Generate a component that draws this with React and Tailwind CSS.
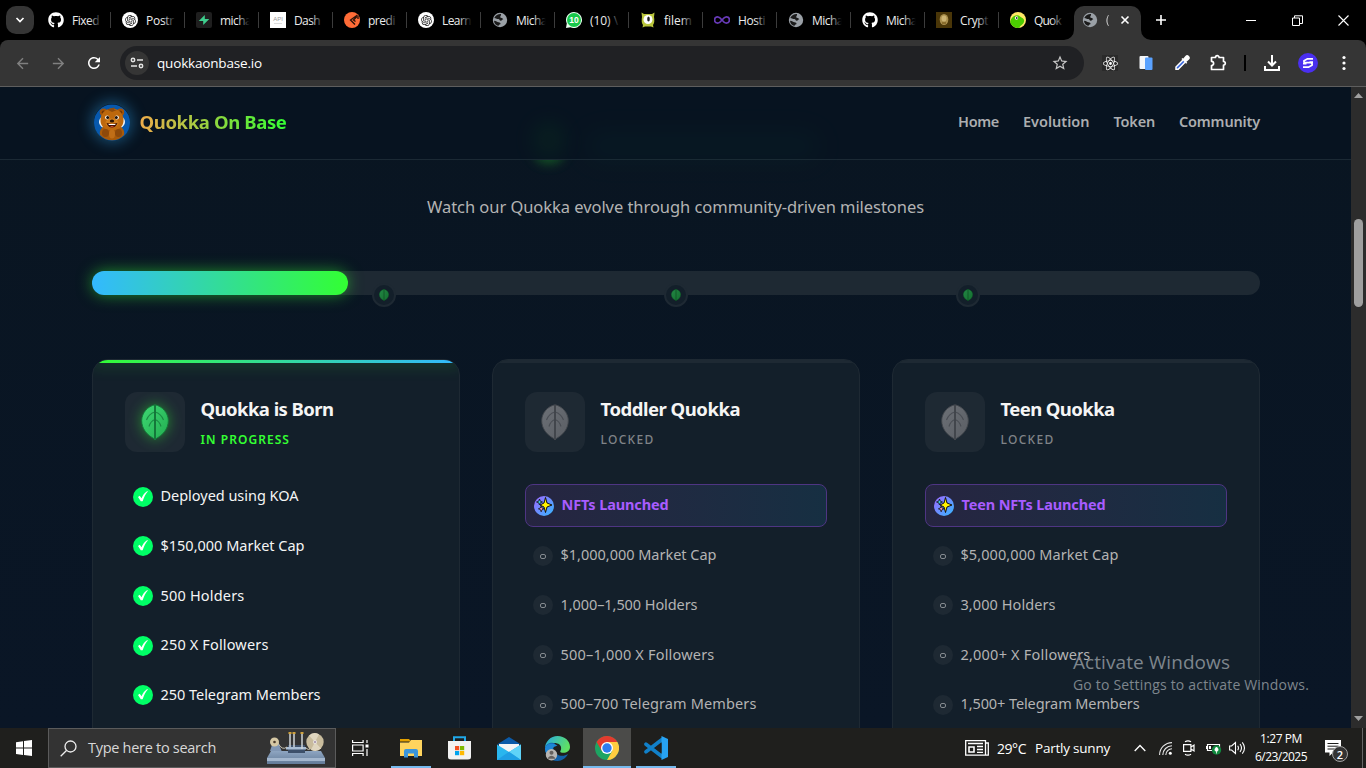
import React, { useLayoutEffect, useRef } from "react";
import { FaGithub } from "react-icons/fa";
import { RiOpenaiFill } from "react-icons/ri";
import { SiReact } from "react-icons/si";
import { MdStarBorder, MdRefresh, MdArrowBack, MdArrowForward } from "react-icons/md";

/* Sets the letter spacing so that a label takes exactly `w` pixels. */
function Fit({ w, className = "", children }) {
  const ref = useRef(null);
  useLayoutEffect(() => {
    const el = ref.current;
    el.style.letterSpacing = "0px";
    const natural = el.getBoundingClientRect().width;
    el.style.letterSpacing = (w - natural) / String(children).length + "px";
  }, [w, children]);
  return (
    <span ref={ref} className={"inline-block whitespace-pre " + className}>
      {children}
    </span>
  );
}

const ui = "font-['Open_Sans','Noto_Sans',sans-serif]";

/* ---------- browser tabs ---------- */
const Gpt = () => (
  <span className="flex h-4 w-4 items-center justify-center rounded-full bg-white">
    <RiOpenaiFill size={13} color="#222" />
  </span>
);
const Globe = () => (
  <svg width="16" height="16" viewBox="0 0 16 16" className="shrink-0">
    <circle cx="8" cy="8" r="7.200" fill="#9aa0a6" />
    <path d="M9 2C6.500 1.800 3.500 3 2.300 6c1.700.3 2.700 1.300 4 1 1.500.2 1 1.700 2.500 1.700 1.300 0 1.200-1.200 2.500-1.400-.5-1.800-2.500-.9-3.100-2.100C8 4 9.500 3.500 9 2zM2 8.800c.2 2.700 2 4.700 4.500 5.200 0-1.200 1-1.500 1.800-1.800.8-.5-.3-1.700-1.800-1.900C5 10.200 4.500 9 2 8.800z" fill="#1b1b1b" />
  </svg>
);
const Github = () => <FaGithub size={16} color="#fff" />;
const Supabase = () => (
  <svg width="16" height="16" viewBox="0 0 16 16">
    <rect width="16" height="16" rx="2" fill="#1f1f1f" />
    <path d="M8.800 3v4.100h4.500L7.200 13V9.100H2.800z" fill="#3ecf8e" />
  </svg>
);
const Api = () => (
  <span className="flex h-4 w-4 flex-col items-center justify-center bg-white font-['Liberation_Sans',sans-serif] text-[6px] leading-[7px] text-[#999]">
    API
    <span className="h-px w-2 bg-[#ddd]" />
  </span>
);
const Postman = () => (
  <svg width="16" height="16" viewBox="0 0 16 16">
    <circle cx="8" cy="8" r="8" fill="#ff6c37" />
    <path d="M13.500 3 6.500 8l4.500 4.500M13 4.500 9.500 8l2 1.500M14 4v3" stroke="#2a1208" strokeWidth="1.300" fill="none" />
  </svg>
);
const Whats = () => (
  <svg width="16" height="16" viewBox="0 0 16 16">
    <path d="M8 0a8 8 0 1 1-3.500 15.200L0 16l.8-4.500A8 8 0 0 1 8 0z" fill="#eafff0" />
    <circle cx="8" cy="8" r="7" fill="#18c84b" />
    <text x="8" y="11" textAnchor="middle" fontSize="8.500" fontWeight="700" fill="#fff" fontFamily="Liberation Sans">10</text>
  </svg>
);
const Monster = () => (
  <svg width="16" height="16" viewBox="0 0 16 16">
    <path d="M1.500.5 4 2h8l2.500-1.500L14 5q1 5-1 8l.5 2.500L11 14.500H5L2.500 15.500 3 13Q1 10 2 5z" fill="#b9c53c" />
    <circle cx="8" cy="7.500" r="4.500" fill="#fff" />
    <ellipse cx="8.500" cy="7" rx="1.300" ry="2.500" fill="#222" />
  </svg>
);
const Infinity8 = () => (
  <svg width="16" height="16" viewBox="0 0 16 16">
    <path d="M8 8C6.300 5.600 5 4.800 3.700 4.800a3.100 3.100 0 0 0 0 6.300C5 11.100 6.300 10.300 8 8s3-3.200 4.300-3.200a3.100 3.100 0 0 1 0 6.300C11 11.100 9.700 10.300 8 8z" fill="none" stroke="#673ab7" strokeWidth="1.700" />
  </svg>
);
const Coin = () => (
  <svg width="16" height="16" viewBox="0 0 16 16">
    <rect width="16" height="16" fill="#4a3608" />
    <ellipse cx="8" cy="7.500" rx="4.300" ry="5.600" fill="#a98e4c" />
    <ellipse cx="8" cy="6.500" rx="2.500" ry="3" fill="#cdb473" />
    <rect x="6" y="10" width="4" height="2" fill="#8a6d2c" />
  </svg>
);
const Gecko = () => (
  <svg width="16" height="16" viewBox="0 0 16 16">
    <circle cx="8" cy="8" r="8" fill="#ffe866" />
    <path d="M2 6c2-3 6-3.500 8-1.500 2 1.500 4 2 4.200 4C14 13 10 13 9.500 15.800 5 16.500 1 13.500.4 10.500.1 8.500 1 7 2 6z" fill="#4bcc00" />
    <circle cx="6.500" cy="6" r="1.700" fill="#fff" />
    <circle cx="6.700" cy="6" r=".9" fill="#333" />
  </svg>
);

const tabs = [
  [Github, "Fixed", 27], [Gpt, "Postr", 28], [Supabase, "micha", 31], [Api, "Dash", 26], [Postman, "predi", 27], [Gpt, "Learn", 29], [Globe, "Micha", 31],
  [Whats, "(10) \\", 28], [Monster, "filem", 28], [Infinity8, "Hosti", 27], [Globe, "Micha", 31], [Github, "Micha", 31], [Coin, "Crypt", 28], [Gecko, "Quok", 27],
];

function TabStrip() {
  return (
    <div className="flex h-10 items-center bg-black">
      <div className="ml-1.5 mr-[3px] flex h-7 w-7 items-center justify-center rounded-[10px] bg-[#353535]">
        <svg width="10" height="10" viewBox="0 0 10 10"><path d="M1.500 3 5 6.500 8.500 3" stroke="#fff" strokeWidth="1.700" fill="none" /></svg>
      </div>
      {tabs.map(([Icon, label, w], i) => (
        <div key={i} className="flex h-full w-[74px] items-center pl-[11px]">
          <span className="flex h-4 w-4 items-center justify-center"><Icon /></span>
          <span className="relative ml-2 w-7 whitespace-nowrap pt-px text-[12px] text-[#ececec]">
            <Fit w={w}>{label}</Fit>
            <span className="absolute inset-y-0 -right-1 w-[15px] bg-gradient-to-r from-transparent to-black to-85%" />
          </span>
          <span className={"ml-auto h-4 w-[1.5px] " + (i < 13 ? "bg-[#3c3c3c]" : "")} />
        </div>
      ))}
      <div className="relative ml-px flex h-full w-[67px] items-end">
        <div className="flex h-[34px] w-full items-center rounded-t-[10px] bg-[#353535] pb-1.5 pl-2">
          <span className="flex h-4 w-4 items-center justify-center"><Globe /></span>
          <span className="ml-2 w-[4px] whitespace-nowrap bg-gradient-to-r from-white to-[#777] bg-clip-text text-[12px] text-transparent">(</span>
          <svg className="ml-[7px]" width="16" height="16" viewBox="0 0 16 16"><path d="M4.500 4.500l7 7M11.500 4.500l-7 7" stroke="#fff" strokeWidth="1.600" /></svg>
        </div>
        <svg className="absolute bottom-0 -left-[10px]" width="10" height="10"><path d="M10 0v10H0A10 10 0 0 0 10 0z" fill="#353535" /></svg>
        <svg className="absolute bottom-0 -right-[10px]" width="10" height="10"><path d="M0 0v10h10A10 10 0 0 1 0 0z" fill="#353535" /></svg>
      </div>
      <div className="flex h-full w-[87px] items-center pl-[15px]">
        <svg width="10" height="10" viewBox="0 0 10 10"><path d="M5 0v10M0 5h10" stroke="#fff" strokeWidth="1.600" /></svg>
      </div>
      <div className="flex w-[46px] justify-center"><span className="h-px w-2.5 bg-white" /></div>
      <div className="flex w-[46px] justify-center">
        <svg width="11" height="11" viewBox="0 0 11 11" fill="none" stroke="#fff"><path d="M.5 3h7v7.500h-7zM2.500 3V.8h8v7.700h-3" /></svg>
      </div>
      <div className="flex w-[46px] justify-center">
        <svg width="11" height="11" viewBox="0 0 11 11"><path d="M.5.5l10 10M10.500.5l-10 10" stroke="#fff" strokeWidth="1.100" /></svg>
      </div>
    </div>
  );
}

const Cell = ({ children }) => <div className="flex h-full w-9 shrink-0 items-center justify-center">{children}</div>;

function Toolbar() {
  return (
    <div className="bg-black">
      <div className="flex h-[47px] items-center rounded-t-[8px] border-b border-[#5e5e5e] bg-[#353535] pl-1">
        <Cell><MdArrowBack size={17} color="#808080" /></Cell>
        <Cell><MdArrowForward size={17} color="#808080" /></Cell>
        <Cell><MdRefresh size={18} color="#fff" /></Cell>
        <div className="ml-2 mr-2 flex h-[34px] w-[964px] items-center rounded-full bg-[#202124] pl-[5px] pr-[15px]">
          <span className="flex h-6 w-6 items-center justify-center rounded-full bg-[#353535]">
            <svg width="14" height="14" viewBox="0 0 14 14" fill="none" stroke="#e3e3e3" strokeWidth="1.500">
              <circle cx="3" cy="4" r="1.700" /><path d="M7 4h6M1 10h6" /><circle cx="11" cy="10" r="1.700" />
            </svg>
          </span>
          <Fit w={105} className="ml-2 text-[13.500px] text-white">quokkaonbase.io</Fit>
          <MdStarBorder size={18} color="#c7c7c7" className="ml-auto" />
        </div>
        <Cell><span className="flex h-4 w-4 items-center justify-center bg-[#2a2a2a]"><SiReact size={15} color="#fff" /></span></Cell>
        <Cell>
          <svg width="14" height="16" viewBox="0 0 14 16"><rect x=".5" y="1" width="9" height="13" rx="1" fill="#f4f6fa" /><rect x="6" y="2.500" width="7.500" height="12.500" rx="1" fill="#5aa2ff" /></svg>
        </Cell>
        <Cell>
          <svg width="16" height="16" viewBox="0 0 16 16"><path d="M9 5 2 12v2.300h2.200L11 7.200" fill="#3563d9" stroke="#fff" strokeWidth="1.500" /><path d="M8 3.500l4.700 4.700M9.500 4.500 12 1.500c1.500-1.500 4 1 2.500 2.500l-3 2.700z" fill="#fff" stroke="#fff" strokeWidth="1.600" /></svg>
        </Cell>
        <Cell>
          <svg width="18" height="18" viewBox="0 0 18 18"><path d="M2.500 3.500h4a1.800 1.800 0 0 1 3.600 0h4.400v4a1.800 1.800 0 0 1 0 3.600v4.400H2.500v-4a2.100 2.100 0 0 0 0-4.200z" fill="none" stroke="#fff" strokeWidth="1.700" strokeLinejoin="round" /></svg>
        </Cell>
        <div className="flex w-[18px] justify-center"><span className="h-4 w-[2px] bg-black" /></div>
        <Cell>
          <svg width="16" height="16" viewBox="0 0 16 16" fill="none" stroke="#fff" strokeWidth="2"><path d="M8 0v10M4 6.500l4 4 4-4M1 11v4h14v-4" /></svg>
        </Cell>
        <Cell>
          <svg width="20" height="20" viewBox="0 0 20 20"><circle cx="10" cy="10" r="10" fill="#4a2ff0" /><path d="M15 5.800H9.500L6 7.800q-.3 1.700 1.500 1.900h5q2.200.2 1.500 2.500l-3.500 2H5M11.500 9.200h3.500M5 10.700h3.500" fill="none" stroke="#fff" strokeWidth="1.800" /></svg>
        </Cell>
        <Cell>
          <svg width="4" height="16" viewBox="0 0 4 16" fill="#fff"><circle cx="2" cy="2.500" r="1.600" /><circle cx="2" cy="8" r="1.600" /><circle cx="2" cy="13.500" r="1.600" /></svg>
        </Cell>
      </div>
    </div>
  );
}

/* ---------- web page ---------- */
function Bear() {
  return (
    <div className="-mt-[3px] h-9 w-9 shrink-0 rounded-full shadow-[0_0_14px_3px_rgba(45,160,230,0.4)]">
      <svg width="36" height="37" viewBox="0 0 36 37">
        <circle cx="18" cy="18.500" r="18" fill="#0759ae" />
        <ellipse cx="18" cy="18" rx="13" ry="8" fill="#eef3f7" />
        <circle cx="9.500" cy="8.300" r="3.700" fill="#a45307" /><circle cx="26.500" cy="8.300" r="3.700" fill="#a45307" />
        <circle cx="9.700" cy="8.300" r="1.900" fill="#6f3504" /><circle cx="26.300" cy="8.300" r="1.900" fill="#6f3504" />
        <path d="M6 31c-1-5 2-8 5-9h14c3 1 6 4 5 9-6 7-18 7-24 0z" fill="#a85a0a" />
        <path d="M18 4.500c7 0 11 5 11.500 11 .5 7-5 11-11.500 11S6 22.500 6.500 15.500C7 9.500 11 4.500 18 4.500z" fill="#bd680d" />
        <path d="M13 5.500 18 4l3-.5-1 2 3 .5-5 2z" fill="#8f4b0b" />
        <ellipse cx="18" cy="19" rx="6.500" ry="4.500" fill="#d17e1c" />
        <circle cx="13.200" cy="13.500" r="2.100" fill="#fff" /><circle cx="22.800" cy="13.500" r="2.100" fill="#fff" />
        <circle cx="13.700" cy="13.600" r="1.500" fill="#1c0f06" /><circle cx="22.300" cy="13.600" r="1.500" fill="#1c0f06" />
        <ellipse cx="18" cy="17" rx="2.200" ry="1.500" fill="#2c1404" />
        <path d="M12.500 18.800c3 1.500 8 1.500 11 0-1 3.800-3.500 4.700-5.500 4.700s-4.500-.9-5.500-4.700z" fill="#431305" />
        <path d="M14.200 19.900h7.600l-1 1.200h-5.600z" fill="#fff" /><path d="M16 22.600c1-.8 3-.8 4 0-1 .9-3 .9-4 0z" fill="#dc4c32" />
        <ellipse cx="11.500" cy="29" rx="3.500" ry="4" fill="#8d490a" /><ellipse cx="24.500" cy="29" rx="3.500" ry="4" fill="#8d490a" />
        <ellipse cx="18" cy="30" rx="3" ry="4.500" fill="#c06e17" />
      </svg>
    </div>
  );
}

function Leaf({ on, small }) {
  const c = small ? ["#238645", "#14702f", "#0b4a22"] : on ? ["#3fd873", "#22ad50", "#14773a"] : ["#6c7076", "#5a5e64", "#42464c"];
  const id = small ? "leafSmall" : on ? "leafOn" : "leafOff";
  return (
    <svg width={small ? 10 : 28} height={small ? 12 : 36} viewBox="0 0 28 36" preserveAspectRatio="none"
      className={on && !small ? "drop-shadow-[0_0_7px_rgba(51,255,51,0.45)]" : ""}>
      <defs><linearGradient id={id} x1="0" y1="0" x2="1" y2="1"><stop stopColor={c[0]} /><stop offset="1" stopColor={c[1]} /></linearGradient></defs>
      <path d="M14 .8C21 2 27.300 9 27.300 16.500 27.300 25 22 31 14 35.300 6 31 .7 25 .7 16.500.7 9 7 2 14 .8z" fill={`url(#${id})`} stroke={c[2]} strokeWidth=".9" />
      <path d="M14 1v35" stroke={c[2]} strokeWidth="2" />
      {!small && <path d="M14 8c-4 1-7 4-8.500 8M14 8c4 1 7 4 8.500 8M14 15.500c-3 1-5 3.500-6 7M14 15.500c3 1 5 3.500 6 7" stroke={c[2]} strokeWidth="1.100" fill="none" opacity=".75" />}
    </svg>
  );
}

const navLinks = [["Home", 41], ["Evolution", 66.500], ["Token", 41.500], ["Community", 81]];

function Nav() {
  return (
    <div className="relative z-10 flex h-[73px] shrink-0 items-center border-b border-[#1b2934] bg-[#071320] pl-[93.500px] pr-[91px]">
      <div className="absolute left-[532px] top-[34px] h-[38px] w-[34px] rounded-full bg-[#0e4420] opacity-20 blur-[9px]" />
      <div className="absolute left-[585px] top-[44px] h-[30px] w-[235px] rounded-full bg-[#0c3935] opacity-15 blur-[12px]" />
      <Bear />
      <Fit w={147} className="-mt-0.5 ml-[10px] bg-linear-to-r/srgb from-[#eeac4b] to-[#33ff33] bg-clip-text text-[18.500px] font-bold leading-7 text-transparent">Quokka On Base</Fit>
      <div className="ml-auto flex gap-6 pb-0.5 text-[14.500px] font-semibold text-[#acaeb0]">
        {navLinks.map(([t, w]) => <span key={t} className="flex"><Fit w={w}>{t}</Fit></span>)}
      </div>
    </div>
  );
}

function Progress() {
  return (
    <div className="relative h-6 w-[1168px] rounded-full bg-[#1e2933]">
      <div className="h-6 w-64 rounded-full bg-linear-to-r/srgb from-[#33b9ff] to-[#33ff33] shadow-[0_0_15px_rgba(51,255,51,0.5)]" />
      {["left-[280px]", "left-[572px]", "left-[864px]"].map((p) => (
        <div key={p} className={"absolute top-3 flex h-6 w-6 items-center justify-center rounded-full border-2 border-[#1e2933] bg-[#131f2a] " + p}>
          <Leaf on small />
        </div>
      ))}
    </div>
  );
}

const Check = () => (
  <span className="flex h-5 w-5 shrink-0 items-center justify-center rounded-full bg-[#00ff66]">
    <svg width="10" height="11" viewBox="0 0 10 11" className="-mt-px"><path d="M0 6 1.700 4.800 3.500 7.300C5 4 6.500 1.800 9.300 0l.5.400C7.500 3 6 6 4.600 10.300H2.800z" fill="#fff" /></svg>
  </span>
);
const Empty = () => (
  <span className="flex h-5 w-5 shrink-0 items-center justify-center rounded-full bg-[#1e2933]">
    <span className="mr-px mt-px h-[5px] w-[6px] rounded-[2px] border border-[#858b90]" />
  </span>
);
const Sparkle = () => (
  <svg width="20" height="20" viewBox="0 0 20 20" className="shrink-0">
    <defs><linearGradient id="spark" x1="0" y1="0" x2="1" y2="1"><stop stopColor="#a066ff" /><stop offset="1" stopColor="#33b9ff" /></linearGradient></defs>
    <circle cx="10" cy="10" r="10" fill="url(#spark)" />
    <path d="M11.500 1.500 13 7 18 9 13 11 11.500 16.500 10 11 6 9l4-2z" fill="#fff200" stroke="#111" strokeWidth="1" />
    <path d="M5.500 3l.8 2.200L8.500 6l-2.200.8L5.500 9l-.8-2.200L2.500 6l2.200-.8z" fill="#3bd5e7" stroke="#111" strokeWidth=".8" />
    <path d="M7.200 10l.8 2 2 .8-2 .8-.8 2.200-.8-2.200-2-.8 2-.8z" fill="#f59bb4" stroke="#111" strokeWidth=".8" />
  </svg>
);

const cards = [
  { title: ["Quokka is Born", 133], status: ["IN PROGRESS", 89.500], on: true, items: [["Deployed using KOA", 138], ["$150,000 Market Cap", 144], ["500 Holders", 84], ["250 X Followers", 108], ["250 Telegram Members", 160]] },
  { title: ["Toddler Quokka", 139.500], status: ["LOCKED", 54], nft: ["NFTs Launched", 107], items: [["$1,000,000 Market Cap", 156], ["1,000–1,500 Holders", 137], ["500–1,000 X Followers", 154], ["500–700 Telegram Members", 196]] },
  { title: ["Teen Quokka", 114], status: ["LOCKED", 54], nft: ["Teen NFTs Launched", 144], items: [["$5,000,000 Market Cap", 158], ["3,000 Holders", 95], ["2,000+ X Followers", 130], ["1,500+ Telegram Members", 179]] },
];

function Card({ c }) {
  return (
    <div className="relative h-[460px] w-[368px] overflow-hidden rounded-[16px] border border-[#1e2933] bg-[#131f2a] px-8 pt-8">
      <div className={"absolute inset-x-0 top-0 h-[3px] " + (c.on ? "bg-linear-to-r/srgb from-[#33ff33] to-[#33b9ff] shadow-[0_0_15px_rgba(51,255,51,0.5)]" : "bg-[#1e2933]")} />
      <div className="flex h-[60px] items-center gap-[15.500px]">
        <div className="flex h-[60px] w-[60px] items-center justify-center rounded-[12px] bg-[#1e2933]"><Leaf on={c.on} /></div>
        <div className="flex flex-col">
          <Fit w={c.title[1]} className="self-start pt-0.5 text-[18.500px] font-bold leading-[34px] text-[#f5f5f5]">{c.title[0]}</Fit>
          <Fit w={c.status[1]} className={"self-start text-[12px] leading-[28px] " + (c.on ? "font-semibold text-[#33ff33]" : "font-medium text-[#808488]")}>{c.status[0]}</Fit>
        </div>
      </div>
      <div className="mt-6 flex flex-col gap-2">
        {c.nft && (
          <div className="mt-2 flex h-[43px] items-center gap-[7.500px] rounded-[8px] border border-[#4e3583] bg-gradient-to-r from-[#262541] to-[#162f42] px-2">
            <Sparkle />
            <Fit w={c.nft[1]} className="-mt-0.5 text-[14.500px] font-bold text-[#a85cff]">{c.nft[0]}</Fit>
          </div>
        )}
        {c.items.map(([t, w]) => (
          <div key={t} className="flex h-[41.600px] items-center gap-[7.500px] px-2">
            {c.on ? <Check /> : <Empty />}
            <Fit w={w} className={"-mt-px text-[14.500px] " + (c.on ? "text-[#f5f5f5]" : "text-[#b3b3b3]")}>{t}</Fit>
          </div>
        ))}
      </div>
    </div>
  );
}

function Page() {
  return (
    <div className="flex h-[641px] bg-[#091522]">
      <div className="relative flex w-[1351px] flex-col overflow-hidden bg-gradient-to-b from-[#091521] to-[#0a1626] font-['Noto_Sans',sans-serif]">
        <Nav />
        <div className="absolute left-[535px] top-[52px] h-[24px] w-[28px] rounded-full bg-[#1f8a2c] opacity-60 blur-[6px]" />
        <div className="flex flex-col pl-[92px]">
          <div className="flex h-[111px] w-[1167px] items-start justify-center pt-[33px] leading-7">
            <Fit w={497} className="text-[16.500px] text-[#b3b3b3]">Watch our Quokka evolve through community-driven milestones</Fit>
          </div>
          <Progress />
          <div className="mt-16 flex gap-8">{cards.map((c) => <Card key={c.title[0]} c={c} />)}</div>
        </div>
      </div>
      <div className="flex w-[15px] flex-col items-center bg-[#2c2c2c] pb-[7px] pt-[6px]">
        <svg width="9" height="5"><path d="M0 5 4.500 0 9 5z" fill="#a0a0a0" /></svg>
        <div className="mt-[121px] h-[88px] w-[9px] rounded-full bg-[#9f9f9f]" />
        <svg className="mt-auto" width="9" height="5"><path d="M0 0l4.500 5L9 0z" fill="#a0a0a0" /></svg>
      </div>
    </div>
  );
}

/* ---------- taskbar ---------- */
const Folder = () => (
  <svg width="22" height="19" viewBox="0 0 22 19"><path d="M0 0h9l2 2.500H0z" fill="#e5a100" /><path d="M0 3.500 9 3.500 11 1h11v16H0z" fill="#ffd45e" /><path d="M4 18.500V12q0-2 2-2h10q2 0 2 2v6.500h-4v-4H8v4z" fill="#3b95db" /></svg>
);
const Store = () => (
  <svg width="23" height="24" viewBox="0 0 23 24"><path d="M6 6V1.200h11V6" fill="none" stroke="#20a8e8" strokeWidth="2" /><path d="M0 5h23v16q0 2.500-3 2.500H3q-3 0-3-2.500z" fill="#f2f2f2" /><path d="M7 10h4.200v4.200H7z" fill="#f25022" /><path d="M12 10h4.200v4.200H12z" fill="#7fba00" /><path d="M7 15h4.200v4.200H7z" fill="#00a4ef" /><path d="M12 15h4.200v4.200H12z" fill="#ffb900" /></svg>
);
const Mail = () => (
  <svg width="24" height="23" viewBox="0 0 24 23"><path d="M0 7.500 12 0l12 7.500z" fill="#0b5aa8" /><path d="M2 7h20v8H2z" fill="#f4f4f4" /><path d="M0 7.500 12 15 24 7.500V23H0z" fill="#29b6ee" /><path d="M12 15 24 7.500V23z" fill="#5fd3f8" /><path d="M0 23 12 14.800 24 23z" fill="#1f9fe4" /></svg>
);
const Edge = () => (
  <svg width="25" height="25" viewBox="0 0 25 25">
    <defs><linearGradient id="edge" x1="0" y1="0" x2="1" y2=".4"><stop stopColor="#25a9e8" /><stop offset="1" stopColor="#5fe063" /></linearGradient></defs>
    <path d="M0 12.500A12.500 12.500 0 0 1 12.500 0C20 0 25 5 25 11c0 4.500-4.500 6.500-9 5.500-1.500-.5-.5-1.500 0-3C17 9 13 7 9.500 7 5 7 1 9.500 0 12.500z" fill="url(#edge)" />
    <path d="M0 12.500C1 7 7 6 10 7.500 7 9.500 8 16 12 18.500c3.500 2 8 1.500 11-.5-2 4-6 7-10.500 7C5 25 0 19 0 12.500z" fill="#1260a8" />
    <path d="M0 12.500C1 7 8 6 12.500 10 9 10 7 12 7.500 16L4 20q-4-3-4-7.500z" fill="#1d86d6" />
    <circle cx="6.500" cy="18.800" r="5.700" fill="#b9b6b3" /><circle cx="6.500" cy="16.800" r="2" fill="#66615e" /><path d="M3 21.800q3.500-4 7 0v1H3z" fill="#66615e" />
  </svg>
);
const Chrome = () => (
  <svg width="24" height="24" viewBox="0 0 24 24"><circle cx="12" cy="12" r="12" fill="#1da462" /><path d="M1.600 6A12 12 0 0 1 22.400 6L12 6 6.800 15z" fill="#e33b2e" /><path d="M22.400 6A12 12 0 0 1 12 24l5.200-9L12 6z" fill="#ffcd40" /><circle cx="12" cy="12" r="6" fill="#fff" /><circle cx="12" cy="12" r="4.700" fill="#2e7cf0" /></svg>
);
const VsCode = () => (
  <svg width="24" height="24" viewBox="0 0 24 24"><path d="M2 8.200 18 20.500M2 15.800 18 3.500" stroke="#1180c9" strokeWidth="3.600" strokeLinecap="round" /><path d="M17.500 0 24 3v18l-6.500 3z" fill="#27a3f3" /><path d="M17.500 7v10L11 12z" fill="#1f1f1d" /></svg>
);
const Machine = () => (
  <svg width="60" height="33" viewBox="0 0 60 33">
    <defs><linearGradient id="steel" x1="0" y1="0" x2="0" y2="1"><stop stopColor="#8ea5c1" /><stop offset="1" stopColor="#637b98" /></linearGradient></defs>
    <path d="M4 19 7 10h5l4 10z" fill="#8197b4" /><path d="M5 19h50l4 7v6H1v-6z" fill="url(#steel)" /><path d="M1 26h58v3H1z" fill="#a4b7ce" />
    <path d="M22 13h17v8H22z" fill="#3d506a" /><path d="M20 15h20v2.500H20z" fill="#a8bdd4" />
    <path d="M24 1v14M28 1v14M36 1v16" stroke="#cfd5d8" strokeWidth="1.500" /><path d="M22.500 0h3v2h-3zM26.500 0h3v2h-3zM34.500 0h3v2h-3z" fill="#cfa23e" />
    <path d="M12 11q4 8 9 4M40 16q5 5 6-6" stroke="#c9c3b0" fill="none" />
    <circle cx="8.500" cy="10" r="4.500" fill="#d6c8a4" /><circle cx="8.500" cy="10" r="1.300" fill="#4a3a2a" />
    <circle cx="49" cy="10" r="8.700" fill="#c9bc9d" /><path d="M49 10 43 3.500A8.700 8.700 0 0 1 53 2.300zM49 10l6 6.500a8.700 8.700 0 0 1-10 1.200z" fill="#e0d6bf" /><circle cx="49" cy="10" r="2" fill="#e7e2de" /><circle cx="49" cy="10" r=".8" fill="#705080" />
  </svg>
);

const apps = [[Folder, "open"], [Store, ""], [Mail, ""], [Edge, ""], [Chrome, "active"], [VsCode, "open"]];

function Taskbar() {
  return (
    <div className="flex h-10 items-center bg-[#1f1f1d] text-white">
      <div className="flex w-12 justify-center">
        <svg width="16" height="16" viewBox="0 0 16 16" fill="#fff"><path d="M0 2.200 7 1.200v6.400H0zM8 1.100 16 0v7.600H8zM0 8.500h7v6.400l-7-1zM8 8.500h8V16l-8-1.100z" /></svg>
      </div>
      <div className="flex h-10 w-72 items-center border border-[#5b5b5b] bg-[#333] pl-[11px] pr-[9px]">
        <svg width="17" height="17" viewBox="0 0 17 17" fill="none" stroke="#eee" strokeWidth="1.300"><circle cx="10.500" cy="6.500" r="5.500" /><path d="M6.500 10.500.7 16.300" /></svg>
        <Fit w={128} className="ml-[11px] text-[14.500px] text-[#d8d8d8]">Type here to search</Fit>
        <span className="ml-auto"><Machine /></span>
      </div>
      <div className="mr-[3px] flex w-12 justify-center">
        <svg width="17" height="16" viewBox="0 0 17 16" fill="none" stroke="#fff" strokeWidth="1.200"><path d="M.6 0v2.500h10.500V0M.6 16v-2.500h10.500V16M.6 5h10.500v6H.6zM15 0v3M15 9v7" /><path d="M13.500 4.500h3v3h-3z" fill="#fff" stroke="none" /></svg>
      </div>
      <div className="flex gap-px">
        {apps.map(([Icon, s], i) => (
          <div key={i} className={"relative flex h-10 w-12 items-center justify-center " + (s === "active" ? "bg-[#4b4b49]" : "")}>
            <span className={i === 1 || i === 3 ? "-ml-px" : ""}><Icon /></span>
            {s && <span className={"absolute bottom-0 h-0.5 bg-[#76b9ed] " + (s === "active" ? "inset-x-0" : "inset-x-1")} />}
          </div>
        ))}
      </div>
      <div className="ml-auto flex h-10 items-center">
        <svg width="24" height="16" viewBox="0 0 24 16" fill="none" stroke="#fff" strokeWidth="1.300"><path d="M.7.700h19.800v14.500H.7zM20.500 3h2.800v12.200h-3M3 3.500h15M12 6.500h6M12 9.500h6M12 12.300h6" /><path d="M4 7h5v5H4z" strokeWidth="1.600" /></svg>
        <Fit w={29} className="ml-2 text-[14px]">29°C</Fit>
        <Fit w={75} className="ml-[9px] text-[13.500px]">Partly sunny</Fit>
        <svg className="ml-6" width="12" height="8" viewBox="0 0 12 8"><path d="M.7 7 6 1.500 11.300 7" fill="none" stroke="#fff" strokeWidth="1.300" /></svg>
        <svg className="ml-[13px]" width="13" height="13" viewBox="0 0 13 13" fill="none" stroke="#e6e6e6" strokeWidth="1.100"><path d="M.6 13A12.400 12.400 0 0 1 13 .6M3.800 13A9.200 9.200 0 0 1 13 3.800M6.800 13A6.200 6.200 0 0 1 13 6.800" /><circle cx="11.300" cy="11.300" r="1.500" fill="#fff" stroke="none" /></svg>
        <svg className="ml-[11px]" width="12" height="16" viewBox="0 0 12 16" fill="none" stroke="#fff" strokeWidth="1.200"><path d="M.6 4.600h7.300v6.800H.6zM8 7l3-2v6L8 9M2 1.800q3-2 6 0M2 14.200q3 2 6 0" /></svg>
        <svg className="ml-[11px]" width="16" height="13" viewBox="0 0 16 13"><path d="M1.500 2.500h12v6h-12z" fill="none" stroke="#fff" strokeWidth="1.200" /><path d="M0 4h1v3H0zM3 4h2v3H3z" fill="#fff" /><circle cx="10.500" cy="8" r="4.700" fill="#10893e" /><path d="M10.500 5q2.500 2 1.200 4h-2.400q-1.300-2 1.200-4zM10.500 9v2.500" stroke="#fff" strokeWidth=".8" fill="#fff" /></svg>
        <svg className="ml-[7px]" width="17" height="14" viewBox="0 0 17 14" fill="none" stroke="#fff" strokeWidth="1.100"><path d="M.6 5h2L6.500 1.500v11L2.600 9h-2zM8.700 4.800q1.500 2.200 0 4.400M11 3q3 4 0 8M13.300 1.300q4.400 5.700 0 11.400" /></svg>
        <div className="ml-[9px] flex w-[52px] flex-col items-center text-[12px] leading-[18px]">
          <Fit w={42}>1:27 PM</Fit>
          <Fit w={52}>6/23/2025</Fit>
        </div>
        <div className="relative ml-[18px] h-6 w-[25px]">
          <svg width="16" height="16" viewBox="0 0 16 16" className="mt-1"><path d="M0 0h16v12.500H8L4.500 16v-3.500H0z" fill="#fff" /><path d="M2.500 3.500h11M2.500 6.200h11M2.500 9h7" stroke="#1f1f1d" /></svg>
          <span className="absolute left-[7px] top-2.5 flex h-4 w-4 items-center justify-center rounded-full border border-[#a0a0a0] bg-[#333] text-[11px] font-semibold leading-none">2</span>
        </div>
        <div className="ml-[12px] mr-[3px] h-10 w-px bg-[#666]" />
      </div>
    </div>
  );
}

export default function App() {
  return (
    <div className={"relative h-[768px] w-[1366px] overflow-hidden " + ui}>
      <TabStrip />
      <Toolbar />
      <Page />
      <Taskbar />
      <div className="absolute left-[1073px] top-[648px] z-20 flex flex-col items-start text-[#7e868d]">
        <Fit w={157} className="text-[19px] leading-7">Activate Windows</Fit>
        <Fit w={236} className="text-[14px] leading-[18px]">Go to Settings to activate Windows.</Fit>
      </div>
    </div>
  );
}
